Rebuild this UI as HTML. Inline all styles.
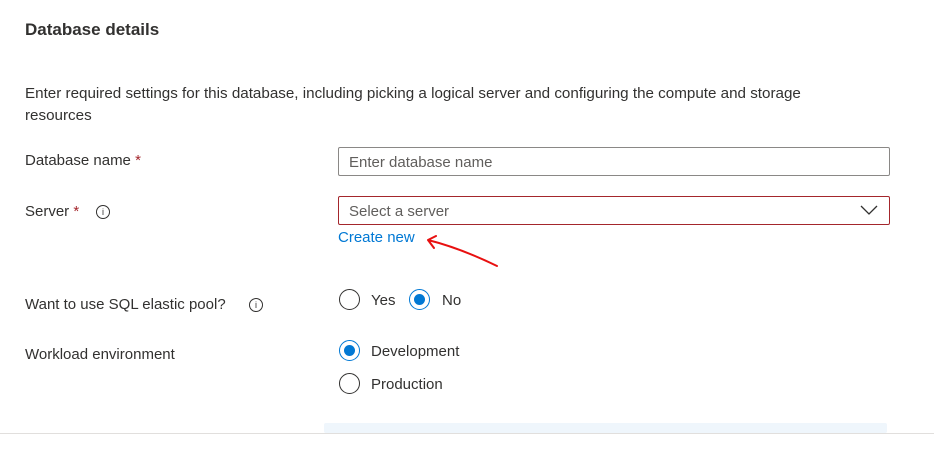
<!DOCTYPE html><html><head><style>
body{margin:0;width:934px;height:450px;background:#fff;font-family:"Liberation Sans",sans-serif;font-size:15px;color:#323130;position:relative;overflow:hidden}
.a{position:absolute;white-space:nowrap}
.req{color:#a4262c}
.inp{position:absolute;left:338px;width:552px;height:29px;border:1px solid #8a8886;border-radius:2px;box-sizing:border-box;color:#605e5c;padding:6px 10px 0;font-size:15px}
.rad{position:absolute;width:21px;height:21px;border:1px solid #323130;border-radius:50%;box-sizing:border-box}
.on{border-color:#0078d4}
.on:after{content:"";position:absolute;left:4px;top:4px;width:11px;height:11px;border-radius:50%;background:#0078d4}
.info{display:inline-block;width:12px;height:12px;border:1px solid #323130;border-radius:50%;font-size:9px;text-align:center;line-height:12px;vertical-align:middle}
</style></head><body>
<div class="a" style="left:25px;top:20px;font-weight:bold;font-size:17px">Database details</div>
<div class="a" style="left:25px;top:83px;line-height:22px;white-space:normal;width:840px;font-size:15.2px">Enter required settings for this database, including picking a logical server and configuring the compute and storage resources</div>
<div class="a" style="left:25px;top:152px">Database name <span class="req">*</span></div>
<div class="inp" style="top:147px">Enter database name</div>
<div class="a" style="left:25px;top:203px">Server <span class="req">*</span></div><span class="a info" style="left:96px;top:205px">i</span>
<div class="inp" style="top:196px;border-color:#a4262c">Select a server</div>
<svg class="a" style="left:860px;top:204px" width="18" height="12"><path d="M1 2l8 8 8-8" fill="none" stroke="#323130" stroke-width="1.3"/></svg>
<div class="a" style="left:338px;top:229px;color:#0078d4">Create new</div>
<svg class="a" style="left:420px;top:232px" width="90" height="40"><path d="M8 8 Q40 16 77 34 M8 8 L16 4 M8 8 L14 16" fill="none" stroke="#e81010" stroke-width="2" stroke-linecap="round"/></svg>
<div class="a" style="left:25px;top:296px">Want to use SQL elastic pool?</div><span class="a info" style="left:249px;top:298px">i</span>
<div class="rad" style="left:339px;top:289px"></div><div class="a" style="left:371px;top:292px">Yes</div>
<div class="rad on" style="left:409px;top:289px"></div><div class="a" style="left:442px;top:292px">No</div>
<div class="a" style="left:25px;top:346px">Workload environment</div>
<div class="rad on" style="left:339px;top:340px"></div><div class="a" style="left:371px;top:343px">Development</div>
<div class="rad" style="left:339px;top:373px"></div><div class="a" style="left:371px;top:376px">Production</div>
<div class="a" style="left:324px;top:423px;width:563px;height:10px;background:#eff6fc;border-radius:2px"></div>
<div class="a" style="left:0;top:433px;width:934px;height:1px;background:#e1dfdd"></div>
</body></html>
